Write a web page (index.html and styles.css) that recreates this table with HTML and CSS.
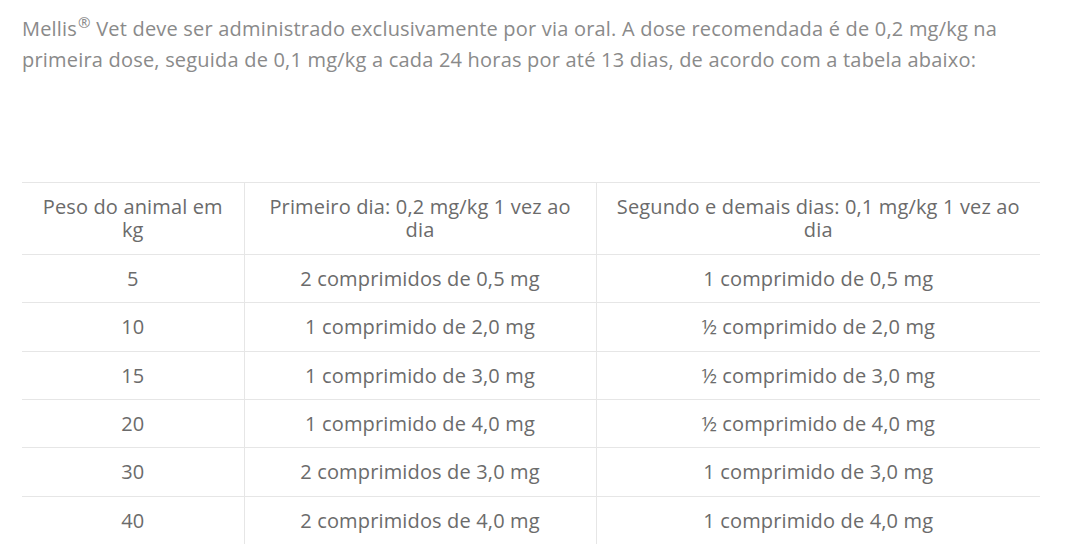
FILE: index.html
```html
<!DOCTYPE html>
<html lang="pt-BR">
<head>
  <meta charset="UTF-8" />
  <meta name="viewport" content="width=device-width, initial-scale=1.0"/>
  <title>Posologia</title>
  <link rel="stylesheet" href="styles.css">
</head>
<body>

<div class="content">
  <p class="intro">Mellis<sup>®</sup> Vet deve ser administrado exclusivamente por via oral. A dose recomendada é de 0,2 mg/kg na primeira dose, seguida de 0,1 mg/kg a cada 24 horas por até 13 dias, de acordo com a tabela abaixo:</p>

  <table class="dose-table">
    <colgroup>
      <col class="col-weight">
      <col class="col-first">
      <col class="col-next">
    </colgroup>
    <tr>
      <th>Peso do animal em kg</th>
      <th>Primeiro dia: 0,2 mg/kg 1 vez ao dia</th>
      <th>Segundo e demais dias: 0,1 mg/kg 1 vez ao dia</th>
    </tr>
    <tr>
      <td>5</td>
      <td>2 comprimidos de 0,5 mg</td>
      <td>1 comprimido de 0,5 mg</td>
    </tr>
    <tr>
      <td>10</td>
      <td>1 comprimido de 2,0 mg</td>
      <td>½ comprimido de 2,0 mg</td>
    </tr>
    <tr>
      <td>15</td>
      <td>1 comprimido de 3,0 mg</td>
      <td>½ comprimido de 3,0 mg</td>
    </tr>
    <tr>
      <td>20</td>
      <td>1 comprimido de 4,0 mg</td>
      <td>½ comprimido de 4,0 mg</td>
    </tr>
    <tr>
      <td>30</td>
      <td>2 comprimidos de 3,0 mg</td>
      <td>1 comprimido de 3,0 mg</td>
    </tr>
    <tr>
      <td>40</td>
      <td>2 comprimidos de 4,0 mg</td>
      <td>1 comprimido de 4,0 mg</td>
    </tr>
  </table>
</div>

</body>
</html>
```

FILE: styles.css
```css
body {
  margin: 0;
  font-family: "Open Sans", "Noto Sans", sans-serif;
  background-color: #fff;
}
.content {
  padding: 13px 30px 0 22px;
}
.intro {
  margin: 0 0 107px;
  font-size: 20px;
  line-height: 31px;
  letter-spacing: 0.2px;
  color: #8a8a8a;
}
.intro sup {
  font-size: 15px;
  line-height: 0;
  margin-left: 1px;
}
.dose-table {
  width: 1018px;
  table-layout: fixed;
  border-collapse: collapse;
  color: #6b6b6b;
  font-size: 20px;
  line-height: 23.4px;
  letter-spacing: 0.15px;
}
.col-weight {
  width: 222px;
}
.col-first {
  width: 352px;
}
th, td {
  font-weight: normal;
  text-align: center;
  padding: 12px 18px;
  border-top: 1px solid #e6e6e6;
  border-left: 1px solid #e6e6e6;
}
th:first-child, td:first-child {
  border-left: none;
}
```
